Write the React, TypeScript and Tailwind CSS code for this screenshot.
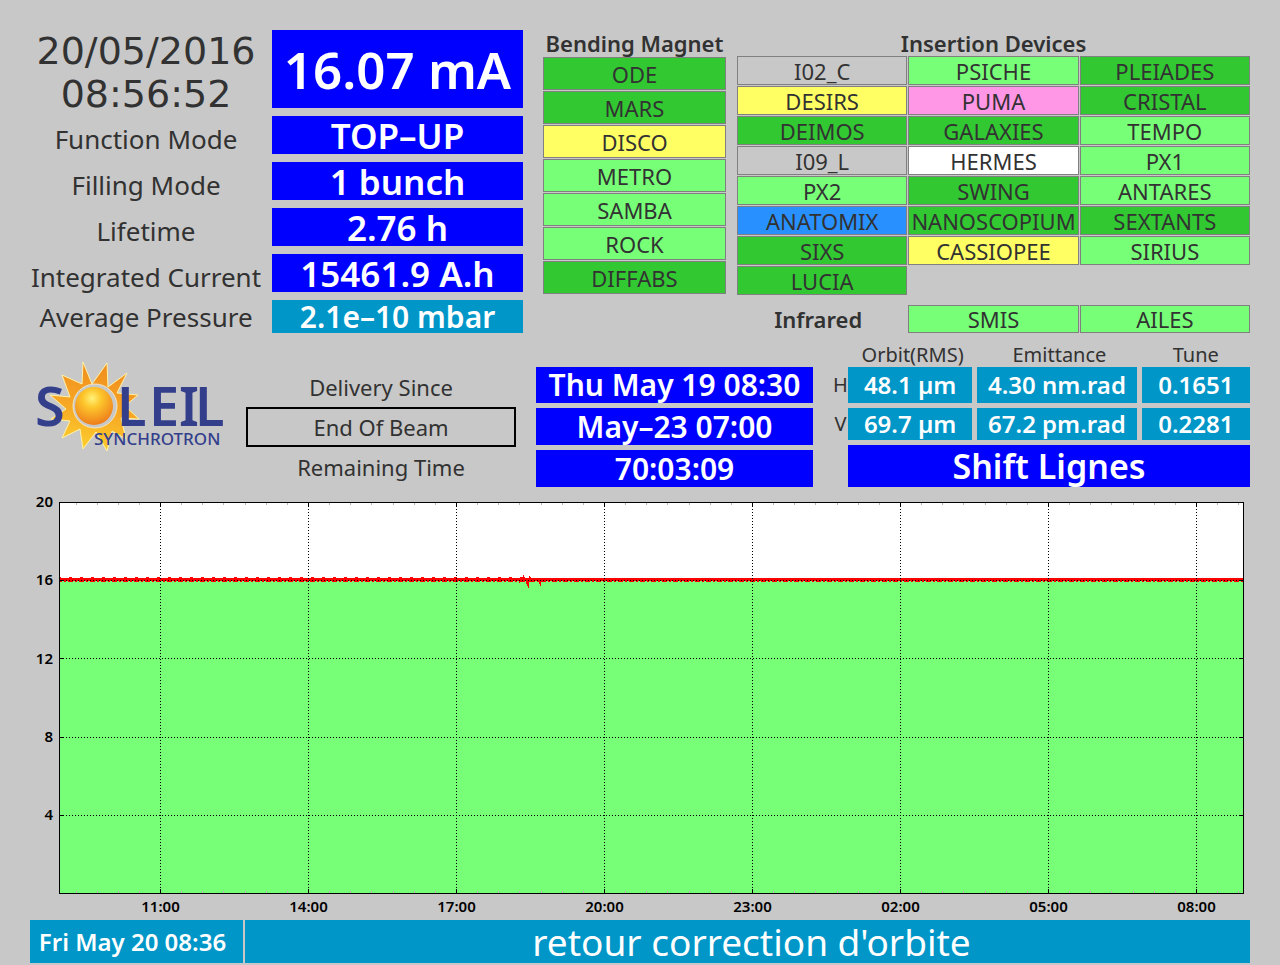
import React from 'react';

type Status = 'on' | 'ready' | 'warn' | 'off' | 'pink' | 'blue' | 'white';

interface Line {
  name: string;
  status: Status;
}

const statusColors: Record<Status, string> = {
  on: 'bg-[#32c832]',
  ready: 'bg-[#78ff78]',
  warn: 'bg-[#ffff64]',
  off: 'bg-[#c8c8c8]',
  pink: 'bg-[#ff96e6]',
  blue: 'bg-[#2891ff]',
  white: 'bg-white',
};

const bendingMagnets: Line[] = [
  { name: 'ODE', status: 'on' },
  { name: 'MARS', status: 'on' },
  { name: 'DISCO', status: 'warn' },
  { name: 'METRO', status: 'ready' },
  { name: 'SAMBA', status: 'ready' },
  { name: 'ROCK', status: 'ready' },
  { name: 'DIFFABS', status: 'on' },
];

const insertionDevices: Line[] = [
  { name: 'I02_C', status: 'off' },
  { name: 'PSICHE', status: 'ready' },
  { name: 'PLEIADES', status: 'on' },
  { name: 'DESIRS', status: 'warn' },
  { name: 'PUMA', status: 'pink' },
  { name: 'CRISTAL', status: 'on' },
  { name: 'DEIMOS', status: 'on' },
  { name: 'GALAXIES', status: 'on' },
  { name: 'TEMPO', status: 'ready' },
  { name: 'I09_L', status: 'off' },
  { name: 'HERMES', status: 'white' },
  { name: 'PX1', status: 'ready' },
  { name: 'PX2', status: 'ready' },
  { name: 'SWING', status: 'on' },
  { name: 'ANTARES', status: 'ready' },
  { name: 'ANATOMIX', status: 'blue' },
  { name: 'NANOSCOPIUM', status: 'on' },
  { name: 'SEXTANTS', status: 'on' },
  { name: 'SIXS', status: 'on' },
  { name: 'CASSIOPEE', status: 'warn' },
  { name: 'SIRIUS', status: 'ready' },
  { name: 'LUCIA', status: 'on' },
];

const machineValues = [
  { label: 'Function Mode', value: 'TOP–UP' },
  { label: 'Filling Mode', value: '1 bunch' },
  { label: 'Lifetime', value: '2.76 h' },
  { label: 'Integrated Current', value: '15461.9 A.h' },
];

const LineCell: React.FC<{ line: Line; height: string }> = ({ line, height }) => (
  <div
    className={`flex items-center justify-center border border-[#808080] text-[22px] leading-none whitespace-nowrap ${height} ${statusColors[line.status]}`}
  >
    {line.name}
  </div>
);

const MachineStatus = () => (
  <div className="grid grid-cols-[minmax(0,232fr)_minmax(0,251fr)] gap-x-2.5 gap-y-2 text-center whitespace-nowrap">
    <div className="flex h-[78px] flex-col items-center justify-center pt-2 font-['DejaVu_Sans','Noto_Sans',sans-serif] text-[38px] leading-[43px]">
      <div>20/05/2016</div>
      <div>08:56:52</div>
    </div>
    <div className="flex h-[78px] items-center justify-center bg-[#0000ff] text-[51px] leading-none font-semibold text-white">
      16.07 mA
    </div>
    {machineValues.map(row => (
      <React.Fragment key={row.label}>
        <div className="flex h-[38px] items-center justify-center pt-2 text-[26px] leading-none">
          {row.label}
        </div>
        <div className="flex h-[38px] items-center justify-center bg-[#0000ff] text-[35px] leading-none font-semibold text-white">
          {row.value}
        </div>
      </React.Fragment>
    ))}
    <div className="flex h-[33px] items-center justify-center text-[26px] leading-none">
      Average Pressure
    </div>
    <div className="flex h-[33px] items-center justify-center bg-[#0096c8] text-[30px] leading-none font-semibold text-white">
      2.1e–10 mbar
    </div>
  </div>
);

const Beamlines = () => (
  <div className="grid grid-cols-[minmax(0,183fr)_minmax(0,513fr)] gap-x-[11px]">
    <section>
      <h2 className="h-[27px] text-center text-[22px] leading-[27px] font-semibold whitespace-nowrap">
        Bending Magnet
      </h2>
      <div className="grid gap-px">
        {bendingMagnets.map(line => (
          <LineCell key={line.name} line={line} height="h-[33px]" />
        ))}
      </div>
    </section>
    <section>
      <h2 className="h-[26px] text-center text-[22px] leading-[26px] font-semibold">
        Insertion Devices
      </h2>
      <div className="grid grid-cols-3 gap-px">
        {insertionDevices.map(line => (
          <LineCell key={line.name} line={line} height="h-[29px]" />
        ))}
      </div>
      <div className="mt-2.5 grid grid-cols-3 gap-px">
        <h2 className="pr-2 text-center text-[22px] leading-7 font-semibold">Infrared</h2>
        <LineCell line={{ name: 'SMIS', status: 'ready' }} height="h-7" />
        <LineCell line={{ name: 'AILES', status: 'ready' }} height="h-7" />
      </div>
    </section>
  </div>
);

const Logo = () => (
  <svg viewBox="0 0 200 100" className="h-[100px] w-[200px]" role="img" aria-label="Soleil Synchrotron">
    <defs>
      <radialGradient id="core" cx="0.45" cy="0.3" r="0.7">
        <stop offset="0" stopColor="#fff27a" />
        <stop offset="0.35" stopColor="#fdc62c" />
        <stop offset="1" stopColor="#ee7d1b" />
      </radialGradient>
      <linearGradient id="rays" x1="0.6" y1="0" x2="0.4" y2="1">
        <stop offset="0" stopColor="#f08c1e" />
        <stop offset="0.5" stopColor="#f6a524" />
        <stop offset="1" stopColor="#fdd02e" />
      </linearGradient>
    </defs>
    <path
      d="M53 6 L62 28 L77 7 L78 31 L97 17 L87 37 L108 39 L95 50 L109 63 L91 62 L96 83 L82 75 L77 95 L66 76 L53 93 L50 73 L32 82 L40 65 L21 63 L36 53 L20 39 L40 41 L32 19 L52 28 Z"
      fill="url(#rays)"
      stroke="#fff3a8"
      strokeWidth="1"
    />
    <circle cx="65" cy="50" r="22" fill="#c8c8c8" stroke="#f4e6c0" strokeWidth="1" />
    <circle cx="64" cy="50" r="19" fill="url(#core)" />
    <g fill="#343f8c" fontFamily="'Noto Sans', sans-serif">
      <text x="5 87 119 149 165" y="70" fontSize="54" fontWeight="600">
        SLEIL
      </text>
      <text x="64" y="89" fontSize="17" fontWeight="500">
        SYNCHROTRON
      </text>
    </g>
  </svg>
);

const Delivery = () => (
  <div className="grid grid-cols-[minmax(0,270fr)_minmax(0,277fr)] gap-x-5 text-center whitespace-nowrap">
    <div className="flex flex-col text-[22px]">
      <div className="h-10 leading-10">Delivery Since</div>
      <div className="h-10 border-2 border-black leading-9">End Of Beam</div>
      <div className="h-10 leading-10">Remaining Time</div>
    </div>
    <div className="flex flex-col gap-[5px] text-[30px] font-semibold text-white">
      <div className="h-9 bg-[#0000ff] leading-9">Thu May 19 08:30</div>
      <div className="h-[37px] bg-[#0000ff] leading-[37px]">May–23 07:00</div>
      <div className="h-[37px] bg-[#0000ff] leading-[37px]">70:03:09</div>
    </div>
  </div>
);

const BeamQuality = () => (
  <div>
    <table className="-mb-[5px] w-full table-fixed border-separate border-spacing-x-0 border-spacing-y-[5px] text-center whitespace-nowrap">
      <colgroup>
        <col className="w-[15px]" />
        <col className="w-[31%]" />
        <col />
        <col className="w-[26%]" />
      </colgroup>
      <thead>
        <tr className="h-3.5 text-[20px] leading-3.5">
          <td className="p-0" />
          <th className="p-0 font-normal">Orbit(RMS)</th>
          <th className="p-0 font-normal">Emittance</th>
          <th className="p-0 font-normal">Tune</th>
        </tr>
      </thead>
      <tbody className="text-[24px] leading-8 font-semibold text-white">
        <tr className="h-9">
          <th className="p-0 text-[20px] font-normal text-[#323232]">H</th>
          <td className="border-r-[5px] border-[#c8c8c8] bg-[#0096c8] p-0">48.1 µm</td>
          <td className="border-r-[5px] border-[#c8c8c8] bg-[#0096c8] p-0">4.30 nm.rad</td>
          <td className="bg-[#0096c8] p-0">0.1651</td>
        </tr>
        <tr className="h-8">
          <th className="p-0 text-[20px] font-normal text-[#323232]">V</th>
          <td className="border-r-[5px] border-[#c8c8c8] bg-[#0096c8] p-0">69.7 µm</td>
          <td className="border-r-[5px] border-[#c8c8c8] bg-[#0096c8] p-0">67.2 pm.rad</td>
          <td className="bg-[#0096c8] p-0">0.2281</td>
        </tr>
      </tbody>
    </table>
    <div className="mt-[5px] ml-[15px] h-[42px] bg-[#0000ff] text-center text-[34px] leading-[42px] font-semibold text-white">
      Shift Lignes
    </div>
  </div>
);

const hours = ['11:00', '14:00', '17:00', '20:00', '23:00', '02:00', '05:00', '08:00'];
const levels = [20, 16, 12, 8, 4];

// one vertical bar per column, noisier before the evening refill
const buildTrace = () => {
  let d = '';
  for (let x = 30; x < 1213; x++) {
    const noise = (x * x * 31 + x * 17) % 11;
    const noisy = x < 495;
    const top = noisy && noise > 4 ? 87 : 88;
    const bottom = noise % 3 === 0 ? 91 : 92;
    d += `M${x + 0.5} ${top}V${bottom}`;
  }
  return d;
};

const trace = buildTrace();

const CurrentChart = () => (
  <svg viewBox="0 0 1220 430" className="block w-full" role="img" aria-label="Beam current over the last 24 hours">
    <rect x="29" y="12" width="1185" height="392" fill="#fff" />
    <rect x="29" y="91" width="1185" height="313" fill="#78ff78" />
    <g fill="none" stroke="#ff0000" strokeWidth="1" shapeRendering="crispEdges">
      <path d={trace} />
      <path d="M489.5 88v5M493.5 85v6M494.5 87v5M496.5 89v5M497.5 91v5M498.5 91v7M499.5 86v6M500.5 87v4M509.5 90v4M510.5 91v5" />
    </g>
    <g stroke="#000" strokeWidth="1" shapeRendering="crispEdges">
      {levels.slice(1).map((level, i) => (
        <g key={level}>
          <line x1="30" x2="1213" y1={90.5 + i * 78.33} y2={90.5 + i * 78.33} strokeDasharray="1 2" />
          <path d={`M30 ${90.5 + i * 78.33}h4M1209 ${90.5 + i * 78.33}h4`} />
        </g>
      ))}
      {hours.map((hour, i) => (
        <g key={hour}>
          <line x1={130.5 + i * 148} x2={130.5 + i * 148} y1="13" y2="403" strokeDasharray="1 2" />
          <path d={`M${130.5 + i * 148} 13v4M${130.5 + i * 148} 399v4`} />
        </g>
      ))}
    </g>
    <g stroke="#b4b4b4" strokeWidth="1" shapeRendering="crispEdges">
      {Array.from({ length: 56 }, (_, i) => i)
        .filter(i => (i + 3) % 7 !== 0)
        .map(i => {
          const x = Math.round(45.5 + i * 21.14);
          return x < 1213 ? <path key={i} d={`M${x + 0.5} 13v2M${x + 0.5} 401v2`} /> : null;
        })}
    </g>
    <rect x="29.5" y="12.5" width="1184" height="391" fill="none" stroke="#000" shapeRendering="crispEdges" />
    <g fill="#000" fontSize="15" fontWeight="600">
      {levels.map((level, i) => (
        <text key={level} x="23" y={17 + i * 78.33} textAnchor="end">
          {level}
        </text>
      ))}
      {hours.map((hour, i) => (
        <text key={hour} x={130.5 + i * 148} y="422" textAnchor="middle">
          {hour}
        </text>
      ))}
    </g>
  </svg>
);

export default function App() {
  return (
    <main className="min-h-screen bg-[#c8c8c8] px-[30px] pt-[30px] pb-0.5 font-['Noto_Sans',sans-serif] text-[#323232]">
      <div className="grid grid-cols-[minmax(0,493fr)_minmax(0,707fr)] gap-x-5">
        <MachineStatus />
        <Beamlines />
      </div>
      <div className="mt-2.5 grid grid-cols-[minmax(0,216fr)_minmax(0,567fr)_minmax(0,437fr)]">
        <div className="pt-[13px]">
          <Logo />
        </div>
        <div className="pt-6">
          <Delivery />
        </div>
        <div className="pl-5">
          <BeamQuality />
        </div>
      </div>
      <div className="mt-[3px]">
        <CurrentChart />
      </div>
      <footer className="grid grid-cols-[minmax(0,213fr)_minmax(0,1005fr)] gap-x-0.5 text-center whitespace-nowrap text-white">
        <div className="h-[43px] bg-[#0096c8] pr-2 text-[24px] leading-[43px] font-semibold">
          Fri May 20 08:36
        </div>
        <div className="h-[43px] bg-[#0096c8] pl-2 text-[37px] leading-[43px]">retour correction d'orbite</div>
      </footer>
    </main>
  );
}
